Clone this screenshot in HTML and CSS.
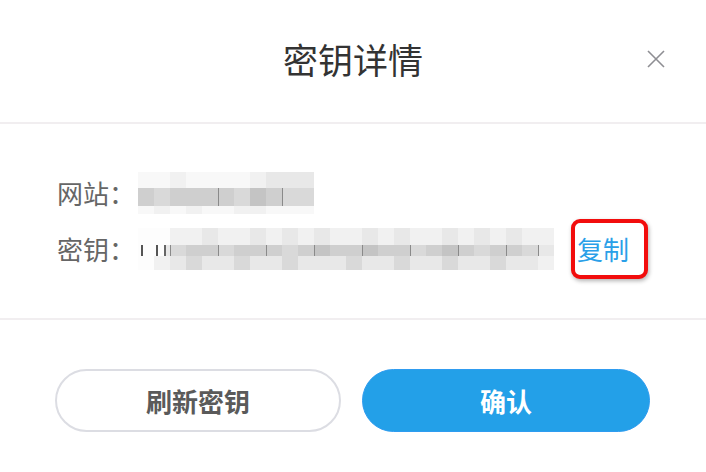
FILE: index.html
```html
<!DOCTYPE html>
<html lang="zh">
<head>
<meta charset="utf-8">
<title>密钥详情</title>
<link rel="stylesheet" href="styles.css">
</head>
<body>
<div class="dialog">
  <header class="head">
    <h1 class="title">密钥详情</h1>
    <button class="close" aria-label="关闭">
      <svg width="20" height="20" viewBox="0 0 20 20"><path d="M2 2 L18 18 M18 2 L2 18" stroke="#8e8e93" stroke-width="1.6" fill="none"/></svg>
    </button>
  </header>
  <section class="body">
    <div class="row row1">
      <span class="label">网站：</span>
      <div class="mosaic m1">
        <i class="a"></i><i class="a"></i><i class="b"></i><i class="a"></i><i class="a"></i><i class="a"></i><i class="a"></i><i class="b"></i><i class="c"></i><i class="c"></i><i class="c"></i>
        <i class="e"></i><i class="d"></i><i class="e"></i><i class="e"></i><i class="e"></i><i class="ln e"></i><i class="d"></i><i class="f"></i><i class="e"></i><i class="ln d"></i><i class="d"></i>
        <i class="a"></i><i class="b"></i><i class="a"></i><i class="b"></i><i class="a"></i><i class="a"></i><i class="b"></i><i class="b"></i><i class="a"></i><i class="a"></i><i class="a"></i>
      </div>
    </div>
    <div class="row row2">
      <span class="label">密钥：</span>
      <div class="mosaic m2">
        <i class="w"></i><i class="w"></i><i class="b"></i><i class="b"></i><i class="c"></i><i class="b"></i><i class="b"></i><i class="c"></i><i class="b"></i><i class="c"></i><i class="b"></i><i class="c"></i><i class="b"></i><i class="b"></i><i class="c"></i><i class="b"></i><i class="c"></i><i class="b"></i><i class="b"></i><i class="c"></i><i class="b"></i><i class="c"></i><i class="b"></i><i class="c"></i><i class="b"></i><i class="b"></i>
        <i class="dk"></i><i class="dk2"></i><i class="ln d"></i><i class="e"></i><i class="e"></i><i class="ln d"></i><i class="e"></i><i class="e"></i><i class="ln e"></i><i class="d"></i><i class="e"></i><i class="ln f"></i><i class="e"></i><i class="e"></i><i class="ln f"></i><i class="e"></i><i class="e"></i><i class="ln d"></i><i class="e"></i><i class="f"></i><i class="ln e"></i><i class="d"></i><i class="e"></i><i class="ln e"></i><i class="d"></i><i class="ln c"></i>
        <i class="w"></i><i class="b"></i><i class="c"></i><i class="d"></i><i class="c"></i><i class="c"></i><i class="d"></i><i class="c"></i><i class="c"></i><i class="d"></i><i class="c"></i><i class="c"></i><i class="c"></i><i class="d"></i><i class="c"></i><i class="c"></i><i class="d"></i><i class="c"></i><i class="c"></i><i class="d"></i><i class="c"></i><i class="c"></i><i class="d"></i><i class="c"></i><i class="c"></i><i class="b"></i>
      </div>
      <button class="copy">复制</button>
    </div>
  </section>
  <footer class="foot">
    <button class="btn btn-ghost">刷新密钥</button>
    <button class="btn btn-primary">确认</button>
  </footer>
</div>
</body>
</html>
```

FILE: styles.css
```css
* { box-sizing: border-box; }
html, body { margin: 0; padding: 0; background: #fff; }
body {
  width: 706px;
  height: 472px;
  overflow: hidden;
  font-family: "Noto Sans CJK SC", "Noto Sans", sans-serif;
}
.dialog { display: flex; flex-direction: column; }
.head {
  height: 124px;
  display: flex;
  align-items: center;
  justify-content: center;
  position: relative;
  border-bottom: 2px solid #f1eef0;
}
.title {
  margin: 0;
  font-size: 35px;
  font-weight: 400;
  color: #333;
  line-height: 1;
  padding-bottom: 6px;
}
.close {
  position: absolute;
  right: 40px;
  top: 49px;
  width: 20px;
  height: 20px;
  padding: 0;
  border: 0;
  background: none;
  display: flex;
}
.body {
  padding: 47px 0 39px 57px;
  display: flex;
  flex-direction: column;
  gap: 4px;
  border-bottom: 2px solid #f1eef0;
}
.row { display: flex; align-items: center; }
.row1 { height: 44px; }
.row2 { height: 60px; }
.label {
  font-size: 26px;
  color: #666;
  line-height: 1;
  width: 81px;
  flex: none;
}
.mosaic { display: grid; margin-left: 0; }
.mosaic i { display: block; }
.m1 {
  grid-template-columns: repeat(11, 16px);
  grid-template-rows: 16px 18px 8px;
}
.m2 {
  grid-template-columns: repeat(26, 16px);
  grid-template-rows: 17px 11px 14px;
}
.w { background: #fdfdfd; }
.a { background: #f8f8f8; }
.b { background: #f1f1f1; }
.c { background: #e8e8e8; }
.d { background: #d9d9d9; }
.e { background: #cfcfcf; }
.f { background: #c4c4c4; }
.ln { box-shadow: inset 1px 0 0 #8a8a8a; }
.dk { background: linear-gradient(90deg, #fdfdfd 3px, #555 3px, #555 5px, #fdfdfd 5px); }
.dk2 { background: linear-gradient(90deg, #fdfdfd 2px, #555 2px, #555 4px, #fdfdfd 4px, #fdfdfd 10px, #666 10px, #666 12px, #e8e8e8 12px); }
.copy {
  margin-left: 17px;
  width: 77px;
  height: 60px;
  border: 4px solid #f20d0d;
  border-radius: 9px;
  background: #fff;
  box-shadow: 1px 2px 4px rgba(0,0,0,0.3);
  color: #2aa0e8;
  font-family: inherit;
  font-size: 26px;
  line-height: 1;
  padding: 0 0 0 2px;
  text-align: left;
}
.foot {
  display: flex;
  gap: 21px;
  padding: 49px 0 0 55px;
}
.btn {
  height: 63px;
  border-radius: 32px;
  font-family: inherit;
  font-size: 26px;
  font-weight: 700;
  line-height: 1;
  padding: 0;
}
.btn-ghost {
  width: 286px;
  background: #fff;
  border: 2px solid #dcdde3;
  color: #5a5a5a;
}
.btn-primary {
  width: 288px;
  background: #23a0e8;
  border: 1px solid #2f9cf0;
  color: #fff;
}
```
